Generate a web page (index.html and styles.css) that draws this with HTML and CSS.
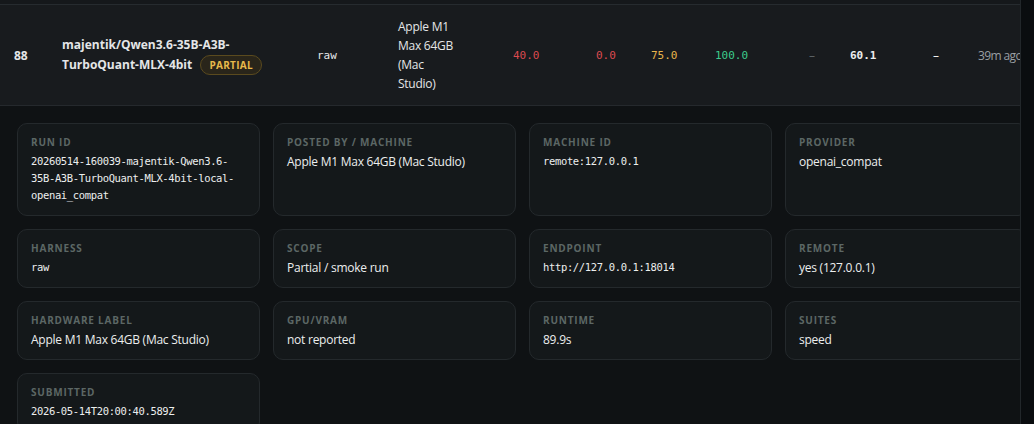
FILE: index.html
```html
<!DOCTYPE html>
<html lang="en">
  <head>
    <meta charset="UTF-8" />
    <meta name="viewport" content="width=device-width, initial-scale=1.0" />
    <title>Run details</title>
    <link rel="stylesheet" href="styles.css">
  </head>
  <body>
    <div class="board">
      <div class="board-inner">
        <div class="row-prev"></div>

        <div class="run-row">
          <div class="cell rank">88</div>
          <div class="cell model">
            <span class="model-name">majentik/Qwen3.6-35B-A3B-TurboQuant-MLX-4bit</span>
            <span class="badge">PARTIAL</span>
          </div>
          <div class="cell mono">raw</div>
          <div class="cell hardware">Apple M1 Max 64GB (Mac Studio)</div>
          <div class="cell mono bad">40.0</div>
          <div class="cell mono bad">0.0</div>
          <div class="cell mono mid">75.0</div>
          <div class="cell mono good">100.0</div>
          <div class="cell dash dim">&ndash;</div>
          <div class="cell mono total">60.1</div>
          <div class="cell dash">&ndash;</div>
          <div class="cell when">39m ago</div>
        </div>

        <div class="details">
          <div class="card">
            <div class="label">Run ID</div>
            <div class="value mono">20260514-160039-majentik-Qwen3.6-35B-A3B-TurboQuant-MLX-4bit-local-openai_compat</div>
          </div>
          <div class="card">
            <div class="label">Posted by / machine</div>
            <div class="value">Apple M1 Max 64GB (Mac Studio)</div>
          </div>
          <div class="card">
            <div class="label">Machine ID</div>
            <div class="value mono">remote:127.0.0.1</div>
          </div>
          <div class="card">
            <div class="label">Provider</div>
            <div class="value">openai_compat</div>
          </div>

          <div class="card">
            <div class="label">Harness</div>
            <div class="value mono">raw</div>
          </div>
          <div class="card">
            <div class="label">Scope</div>
            <div class="value">Partial / smoke run</div>
          </div>
          <div class="card">
            <div class="label">Endpoint</div>
            <div class="value mono">http://127.0.0.1:18014</div>
          </div>
          <div class="card">
            <div class="label">Remote</div>
            <div class="value">yes (127.0.0.1)</div>
          </div>

          <div class="card">
            <div class="label">Hardware label</div>
            <div class="value">Apple M1 Max 64GB (Mac Studio)</div>
          </div>
          <div class="card">
            <div class="label">GPU/VRAM</div>
            <div class="value">not reported</div>
          </div>
          <div class="card">
            <div class="label">Runtime</div>
            <div class="value">89.9s</div>
          </div>
          <div class="card">
            <div class="label">Suites</div>
            <div class="value">speed</div>
          </div>

          <div class="card">
            <div class="label">Submitted</div>
            <div class="value mono">2026-05-14T20:00:40.589Z</div>
          </div>
        </div>
      </div>
    </div>
  </body>
</html>
```

FILE: styles.css
```css
body {
  margin: 0;
  background: #0a0d0f;
  color: #e4e6e7;
  font-family: "Open Sans", "Noto Sans", Arial, sans-serif;
  font-size: 12px;
  letter-spacing: -0.25px;
}
.mono {
  font-family: "DejaVu Sans Mono", "Liberation Mono", monospace;
  letter-spacing: 0;
}

.board {
  width: 1020px;
  height: 424px;
  overflow: hidden;
  border-right: 1px solid #22272a;
  background: #0f1214;
}
.board-inner {
  width: 1046px;
}
.row-prev {
  height: 4px;
  background: #15181b;
  border-bottom: 1px solid #262b2f;
}

/* leaderboard row */
.run-row {
  display: grid;
  grid-template-columns: 48px 255px 81px 115px 83px 55px 64px 94px 41px 83px 45px 80px;
  align-items: center;
  padding: 12px 0 12px 14px;
  background: #181b1e;
  border-bottom: 1px solid #25292d;
  height: 76px;
}
.cell {
  line-height: 19px;
  white-space: nowrap;
}
.rank {
  font-weight: 700;
  letter-spacing: 0;
}
.model {
  white-space: normal;
  font-weight: 700;
  line-height: 20px;
  letter-spacing: 0;
  padding-right: 22px;
}
.badge {
  display: inline-block;
  margin-left: 5px;
  padding: 0 8px;
  height: 18px;
  line-height: 18px;
  border: 1px solid #5a4a1e;
  border-radius: 10px;
  background: #29251a;
  color: #e7b94b;
  font-size: 10px;
  letter-spacing: 0.3px;
}
.run-row .mono {
  font-size: 11px;
}
.hardware {
  white-space: normal;
  width: 64px;
}
.bad { color: #dc4a4f; }
.mid { color: #e8b64b; }
.good { color: #3ccb8c; }
.total {
  font-weight: 700;
  color: #eceeef;
}
.dash {
  color: #f0f0f0;
}
.dash.dim {
  color: #5b6165;
}
.when {
  color: #9a9fa3;
  letter-spacing: -0.6px;
}

/* expanded run details */
.details {
  display: grid;
  grid-template-columns: repeat(4, 243px);
  gap: 13px;
  padding: 17px 17px 16px;
}
.card {
  padding: 12px 13px 11px;
  border: 1px solid #24292c;
  border-radius: 10px;
  background: #14181a;
}
.label {
  font-size: 10px;
  font-weight: 700;
  line-height: 13px;
  letter-spacing: 0.8px;
  text-transform: uppercase;
  color: #5c6765;
}
.value {
  margin-top: 4px;
  line-height: 17px;
  color: #eceeee;
}
.value.mono {
  font-size: 10.5px;
  letter-spacing: -0.35px;
}
```
